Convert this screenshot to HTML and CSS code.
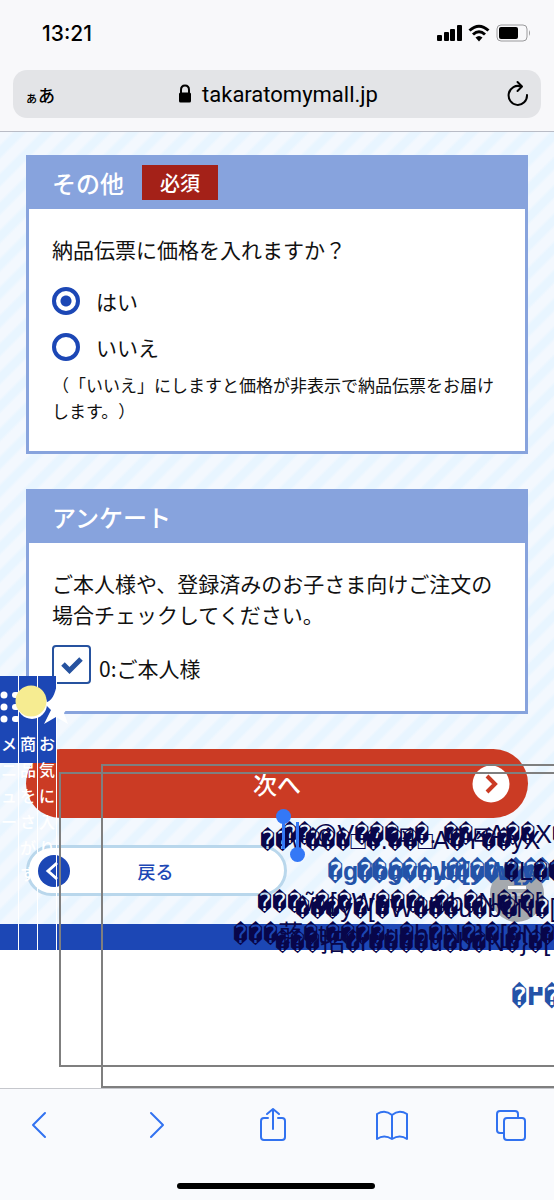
FILE: index.html
```html
<!DOCTYPE html>
<html lang="ja">
<head>
    <meta charset="UTF-8" />
    <meta name="viewport" content="width=device-width, initial-scale=1.0" />
    <title>takaratomymall.jp</title>
    <link rel="stylesheet" href="styles.css">
</head>
<body>
    <header class="browser-top">
        <div class="status-bar">
            <span class="clock">13:21</span>
            <svg class="status-icons" width="94" height="18" viewBox="0 0 94 18">
                <rect x="0" y="11" width="5" height="6" rx="1" />
                <rect x="7" y="8" width="5" height="9" rx="1" />
                <rect x="13" y="5" width="5" height="12" rx="1" />
                <rect x="20" y="1" width="5" height="16" rx="1" />
                <g fill="none" stroke="#000" stroke-width="3">
                    <path d="M32.500 6.500 Q42 -2 51.500 6.500" />
                    <path d="M36 10.500 Q42 5 48 10.500" />
                </g>
                <path d="M38.500 13.500 Q42 10.500 45.500 13.500 L42 17.500 Z" />
                <rect x="60" y="1" width="30" height="16" rx="4" fill="none" stroke="#9a9a9c" />
                <rect x="62" y="3" width="19" height="12" rx="2" />
                <path d="M92 6 Q94 9 92 12 Z" fill="#9a9a9c" />
            </svg>
        </div>
        <div class="address-bar">
            <button type="button" class="text-size"><small>ぁ</small>あ</button>
            <a href="#" class="domain">
                <svg width="14" height="20" viewBox="0 0 14 20">
                    <path d="M3 9 V6 Q3 1.500 7 1.500 Q11 1.500 11 6 V9" fill="none" stroke="#000" stroke-width="2" />
                    <rect x="1" y="8.500" width="12" height="10" rx="1.500" />
                </svg>
                takaratomymall.jp
            </a>
            <button type="button" aria-label="再読み込み">
                <svg width="22" height="28" viewBox="0 0 22 28" fill="none" stroke="#000" stroke-width="2" stroke-linecap="round" stroke-linejoin="round">
                    <path d="M20 15 A9.200 9.500 0 1 1 14 6.500" />
                    <path d="M10.500 2 L15 6.500 L10.500 11" />
                </svg>
            </button>
        </div>
    </header>

    <main class="page">
        <form class="order-form">
            <section class="card">
                <h2>その他 <span class="required">必須</span></h2>
                <div class="card-body">
                    <p>納品伝票に価格を入れますか？</p>
                    <label class="radio-row"><input type="radio" name="price" checked /><span>はい</span></label>
                    <label class="radio-row"><input type="radio" name="price" /><span>いいえ</span></label>
                    <p class="note">（「いいえ」にしますと価格が非表示で納品伝票をお届けします。）</p>
                </div>
            </section>

            <section class="card">
                <h2>アンケート</h2>
                <div class="card-body">
                    <p>ご本人様や、登録済みのお子さま向けご注文の場合チェックしてください。</p>
                    <label class="check-row">
                        <span class="check-box">
                            <input type="checkbox" checked />
                            <svg width="24" height="20" viewBox="0 0 24 20"><path d="M3 9 L9.500 15.500 L21 4" fill="none" stroke="#26529f" stroke-width="5" /></svg>
                        </span>
                        <span>0:ご本人様</span>
                    </label>
                </div>
            </section>

            <button type="button" class="next">
                次へ
                <svg width="38" height="38" viewBox="0 0 38 38">
                    <circle cx="19" cy="19" r="18.500" fill="#fff" />
                    <path d="M15 11 L23 19 L15 27" fill="none" stroke="#cb3b24" stroke-width="4" />
                </svg>
            </button>
            <button type="button" class="back">
                <svg width="32" height="32" viewBox="0 0 32 32">
                    <circle cx="16" cy="16" r="16" fill="#1c47b5" />
                    <path d="M19 8 L10 16 L19 24" fill="none" stroke="#fff" stroke-width="3" />
                </svg>
                戻る
            </button>
        </form>
        <div class="footer-line"></div>

        <nav class="side-menu">
            <a href="#">
                <svg width="18" height="60" viewBox="0 0 18 60" fill="#fff">
                    <circle cx="4" cy="19" r="3.500" /><circle cx="4" cy="31" r="3.500" /><circle cx="4" cy="43" r="3.500" />
                    <rect x="12" y="16" width="8" height="6" rx="3" /><rect x="12" y="28" width="8" height="6" rx="3" /><rect x="12" y="40" width="8" height="6" rx="3" />
                </svg>
                <span>メニュー</span>
            </a>
            <a href="#" class="search">
                <svg width="18" height="60" viewBox="0 0 18 60">
                    <circle cx="13" cy="28" r="15" fill="#fff" />
                    <circle cx="12" cy="25" r="15.500" fill="#f6ec91" />
                </svg>
                <span>商品をさがす</span>
            </a>
            <a href="#">
                <svg width="18" height="60" viewBox="0 0 18 60">
                    <path d="M19 8 C17 18 14 26 6 27 L13 34 L6 48 L18 41 L30 48 L26 37 L32 29 Q22 27 19 8 Z" fill="#fff" />
                </svg>
                <span>お気に入り</span>
            </a>
        </nav>

        <div class="frame frame-back"></div>
        <div class="frame frame-front"></div>

        <div class="fab" aria-hidden="true"><span></span></div>
        <div class="garbled">
            <p class="g1">��@V���⊠�. ��⊠A��X��</p>
            <p class="g2">��\r���□�.��□A�Y��yX</p>
            <p class="g3">�g�b�v�y�[�W��Y</p>
            <p class="g4">��g�mb�y�v[y�W�p�Y</p>
            <p class="g5">���̃v�[�W���u�b�N�}�[</p>
            <p class="g6">���̃y�[�W���u�b�N�[</p>
            <p class="g7">���蕗�t����u�b�N�}�[�N�</p>
            <p class="g8">���招�r����u�b�N�}�[</p>
            <p class="g9">�߂�</p>
            <p class="g10">�L��</p>
        </div>
        <i class="handle handle-start"></i>
        <i class="handle handle-end"></i>
    </main>

    <footer class="toolbar">
        <div class="toolbar-buttons">
            <button type="button" aria-label="戻る"><svg width="30" height="34" viewBox="0 0 30 34"><path d="M20 5 L8 17 L20 29" /></svg></button>
            <button type="button" aria-label="進む"><svg width="30" height="34" viewBox="0 0 30 34"><path d="M9 5 L21 17 L9 29" /></svg></button>
            <button type="button" aria-label="共有"><svg width="30" height="34" viewBox="0 0 30 34"><path d="M10 10 H6 Q3 10 3 13 V29 Q3 32 6 32 H24 Q27 32 27 29 V13 Q27 10 24 10 H20" /><path d="M15 21 V1 M9 6 L15 1 L21 6" /></svg></button>
            <button type="button" aria-label="ブックマーク"><svg width="34" height="34" viewBox="0 0 34 34"><path d="M17 7 Q10 1 2 6 V31 Q9 26 17 31 Q25 26 32 31 V6 Q24 1 17 7 V31" /></svg></button>
            <button type="button" aria-label="タブ"><svg width="32" height="34" viewBox="0 0 32 34"><path d="M9 25 H5 Q2 25 2 22 V6 Q2 3 5 3 H20 Q23 3 23 6 V10" /><rect x="9" y="10" width="21" height="22" rx="3" /></svg></button>
        </div>
        <div class="home-indicator"></div>
    </footer>
</body>
</html>
```
FILE: styles.css
```css
* {
  box-sizing: border-box;
}

body {
  margin: 0;
  min-height: 100vh;
  display: flex;
  flex-direction: column;
  font-family: "Noto Sans CJK JP", sans-serif;
  font-weight: 400;
  color: #111;
  background-color: #fff;
  text-spacing-trim: space-all;
}

button {
  padding: 0;
  border: none;
  background: none;
  color: inherit;
  font-family: inherit;
  cursor: pointer;
}

p {
  margin: 0;
}

svg {
  display: block;
  overflow: visible;
}

/* browser bars */
.browser-top {
  padding: 21px 13px 13px;
  background-color: #f8f8fa;
  border-bottom: 1px solid #b9bcc6;
}

.status-bar {
  display: flex;
  justify-content: space-between;
  align-items: center;
  height: 24px;
  padding: 0 10px 0 29px;
  margin-bottom: 25px;
}

.clock {
  font-family: Inter, sans-serif;
  font-size: 21px;
  font-weight: 500;
  color: #000;
}

.address-bar {
  display: flex;
  justify-content: space-between;
  align-items: center;
  height: 48px;
  padding: 0 12px;
  border-radius: 14px;
  background-color: #e3e4e7;
  color: #000;
}

.text-size {
  font-size: 17px;
  font-weight: 500;
  white-space: nowrap;
}

.text-size small {
  font-size: 13px;
}

.domain {
  display: flex;
  align-items: center;
  gap: 10px;
  padding-right: 6px;
  font-family: Roboto, sans-serif;
  font-size: 22px;
  font-weight: 400;
  color: #000;
  text-decoration: none;
}

/* page */
.page {
  position: relative;
  flex: 1;
  overflow: hidden;
}

.order-form {
  padding: 23px 26px 28px;
  background: repeating-linear-gradient(135deg, #f3f8fe 0, #f3f8fe 8px, #e8f5ff 11px, #e8f5ff 17px, #f3f8fe 20px);
}

.card {
  margin-bottom: 35px;
  border: 3px solid #87a3dd;
  background-color: #fff;
}

.card h2 {
  display: flex;
  align-items: center;
  gap: 18px;
  height: 51px;
  margin: 0;
  padding: 0 23px 3px;
  background-color: #87a3dd;
  color: #fff;
  font-size: 24px;
  font-weight: 500;
}

.required {
  padding: 0 18px;
  background-color: #a42118;
  font-size: 20px;
  line-height: 35px;
}

.card-body {
  padding: 25px 23px 27px;
  font-size: 21px;
  line-height: 31px;
}

.radio-row {
  display: flex;
  align-items: center;
  gap: 16px;
  height: 46px;
}

.card-body p + .radio-row {
  margin-top: 13px;
}

.radio-row input {
  appearance: none;
  width: 28px;
  height: 28px;
  margin: 0;
  border: 4px solid #1c47b5;
  border-radius: 50%;
}

.radio-row input:checked {
  background: radial-gradient(circle, #1c47b5 5px, #fff 6px);
}

.card-body .note {
  font-size: 17px;
  line-height: 26px;
  margin-top: 2px;
}

.check-row {
  display: flex;
  align-items: flex-end;
  gap: 8px;
  margin-top: 15px;
}

.check-box {
  display: grid;
  place-items: center;
}

.check-box input,
.check-box svg {
  grid-area: 1 / 1;
}

.check-box input {
  appearance: none;
  width: 39px;
  height: 39px;
  margin: 0;
  border: 2px solid #26529f;
  border-radius: 4px;
}

.next {
  display: grid;
  grid-template-columns: 38px 1fr 38px;
  align-items: center;
  width: 100%;
  height: 69px;
  padding: 0 18px;
  margin-bottom: 27px;
  border-radius: 35px;
  background-color: #cb3b24;
  color: #fff;
  font-size: 24px;
  font-weight: 500;
}

.next::before {
  content: "";
}

.back {
  display: grid;
  grid-template-columns: 32px 1fr 34px;
  align-items: center;
  width: 52%;
  height: 51px;
  padding: 0 9px;
  border: 3px solid #b9d7ec;
  border-radius: 26px;
  background-color: #fff;
  color: #1c47b5;
  font-size: 18px;
  font-weight: 500;
}

.footer-line {
  height: 26px;
  background-color: #1c47b5;
}

/* menu over the page */
.side-menu {
  position: absolute;
  top: 544px;
  left: 0;
  display: flex;
  height: 274px;
}

.side-menu a {
  width: 19px;
  border-right: 1px solid #fff;
  background: linear-gradient(#1c47b5 87px, transparent 87px);
  color: #fff;
  font-size: 16px;
  font-weight: 500;
  line-height: 26px;
  text-align: center;
  text-decoration: none;
}

.side-menu .search {
  position: relative;
  z-index: 1;
}

.side-menu span {
  display: block;
  width: 16px;
  margin: -6px auto 0;
  word-break: break-all;
  line-break: anywhere;
}

.frame {
  position: absolute;
  right: -2px;
  border: 2px solid #7f7f7f;
}

.frame-back {
  top: 640px;
  left: 59px;
  height: 295px;
}

.frame-front {
  top: 632px;
  left: 101px;
  bottom: 0;
}

.fab {
  position: absolute;
  top: 734px;
  right: 10px;
  display: flex;
  justify-content: center;
  width: 54px;
  height: 56px;
  padding-top: 20px;
  border-radius: 50%;
  background-color: #a5a9ae;
}

.fab span {
  width: 18px;
  height: 10px;
  border-top: 3px solid #fff;
  border-bottom: 3px solid #c4c7ca;
}

/* garbled labels, stacked on each other */
.garbled {
  position: absolute;
  inset: 0;
  overflow: hidden;
  color: #08064a;
  font-family: "Liberation Sans", "DejaVu Sans Mono", "DejaVu Sans", "Noto Sans CJK JP", sans-serif;
  font-size: 25px;
  font-weight: 400;
  line-height: 32px;
  white-space: nowrap;
}

.garbled p {
  position: absolute;
}

.g3, .g4, .g9 {
  color: #2453a8;
  font-weight: 700;
}

.g1 { top: 686px; left: 282px; }
.g2 { top: 692px; left: 260px; }
.g3 { top: 723px; left: 328px; }
.g4 { top: 723px; left: 357px; }
.g5 { top: 754px; left: 257px; }
.g6 { top: 760px; left: 295px; }
.g7 { top: 786px; left: 233px; }
.g8 { top: 794px; left: 275px; }
.g9 { top: 848px; left: 512px; }
.g10 { top: 723px; left: 504px; }

.handle {
  position: absolute;
  width: 3px;
  height: 34px;
  background-color: #3478f6;
}

.handle::after {
  content: "";
  position: absolute;
  left: -6px;
  width: 15px;
  height: 15px;
  border-radius: 50%;
  background-color: #3478f6;
}

.handle-start {
  top: 683px;
  left: 282px;
}

.handle-start::after {
  top: -6px;
}

.handle-end {
  top: 690px;
  left: 296px;
}

.handle-end::after {
  bottom: -6px;
}

/* bottom toolbar */
.toolbar {
  padding: 19px 27px 11px 25px;
  border-top: 1px solid #c5c7cc;
  background-color: #f9fafd;
}

.toolbar-buttons {
  display: flex;
  justify-content: space-between;
  height: 34px;
  margin-bottom: 41px;
}

.toolbar-buttons svg {
  fill: none;
  stroke: #3272f0;
  stroke-width: 2;
  stroke-linecap: round;
  stroke-linejoin: round;
}

.home-indicator {
  width: 198px;
  height: 6px;
  margin: 0 auto;
  border-radius: 3px;
  background-color: #000;
}
```
